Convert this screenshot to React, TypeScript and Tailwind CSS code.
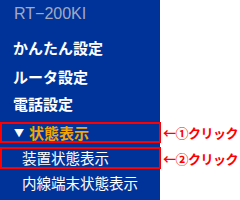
const jp = { fontFamily: '"Noto Sans CJK JP", "Noto Sans", sans-serif' };

function Note({ n }: { n: string }) {
  return (
    <div className="flex items-center whitespace-nowrap pl-[3px] text-[13px] font-bold leading-none tracking-[-0.5px] text-[#ff0000]" style={jp}>
      <span>←</span>
      <span>{n}クリック</span>
    </div>
  );
}

export default function App() {
  return (
    <div className="grid h-[200px] w-[240px] grid-cols-[160px_80px] overflow-hidden bg-white" style={jp}>
      <div className="flex h-[27px] items-center bg-[#00339a] pl-[14px] text-[16px] leading-none text-[#a3a9bf]" style={{ fontFamily: '"Liberation Sans", sans-serif' }}>
        RT−200KI
      </div>
      <div />

      <div className="flex h-[41px] items-center bg-[#00339a] pl-[13px] text-[15px] font-bold leading-none text-white">かんたん設定</div>
      <div />

      <div className="flex h-[17px] items-center bg-[#00339a] pl-[13px] text-[15px] font-bold leading-none text-white">ルータ設定</div>
      <div />

      <div className="flex h-[37px] items-center bg-[#00339a] pl-[13px] text-[15px] font-bold leading-none text-white">電話設定</div>
      <div />

      <div className="relative z-10 flex h-[21px] w-[161px] items-center gap-[5px] border-2 border-[#ff0000] bg-[#00339a] pl-[12px] text-[15px] font-bold leading-none text-[#f5a500]">
        <span className="text-[10px] text-white">▼</span>
        <span>状態表示</span>
      </div>
      <Note n="①" />

      <div className="bg-[#00339a] pt-[4px]">
        <div className="flex h-[22px] w-[161px] items-center border-2 border-[#ff0000] pl-[20px] text-[14.5px] leading-none text-white">装置状態表示</div>
      </div>
      <div className="pt-[4px]">
        <div className="flex h-[22px] items-center">
          <Note n="②" />
        </div>
      </div>

      <div className="flex h-[36px] items-start bg-[#00339a] pl-[22px] pt-[7px] text-[14.5px] leading-none text-white">内線端末状態表示</div>
      <div />
    </div>
  );
}
